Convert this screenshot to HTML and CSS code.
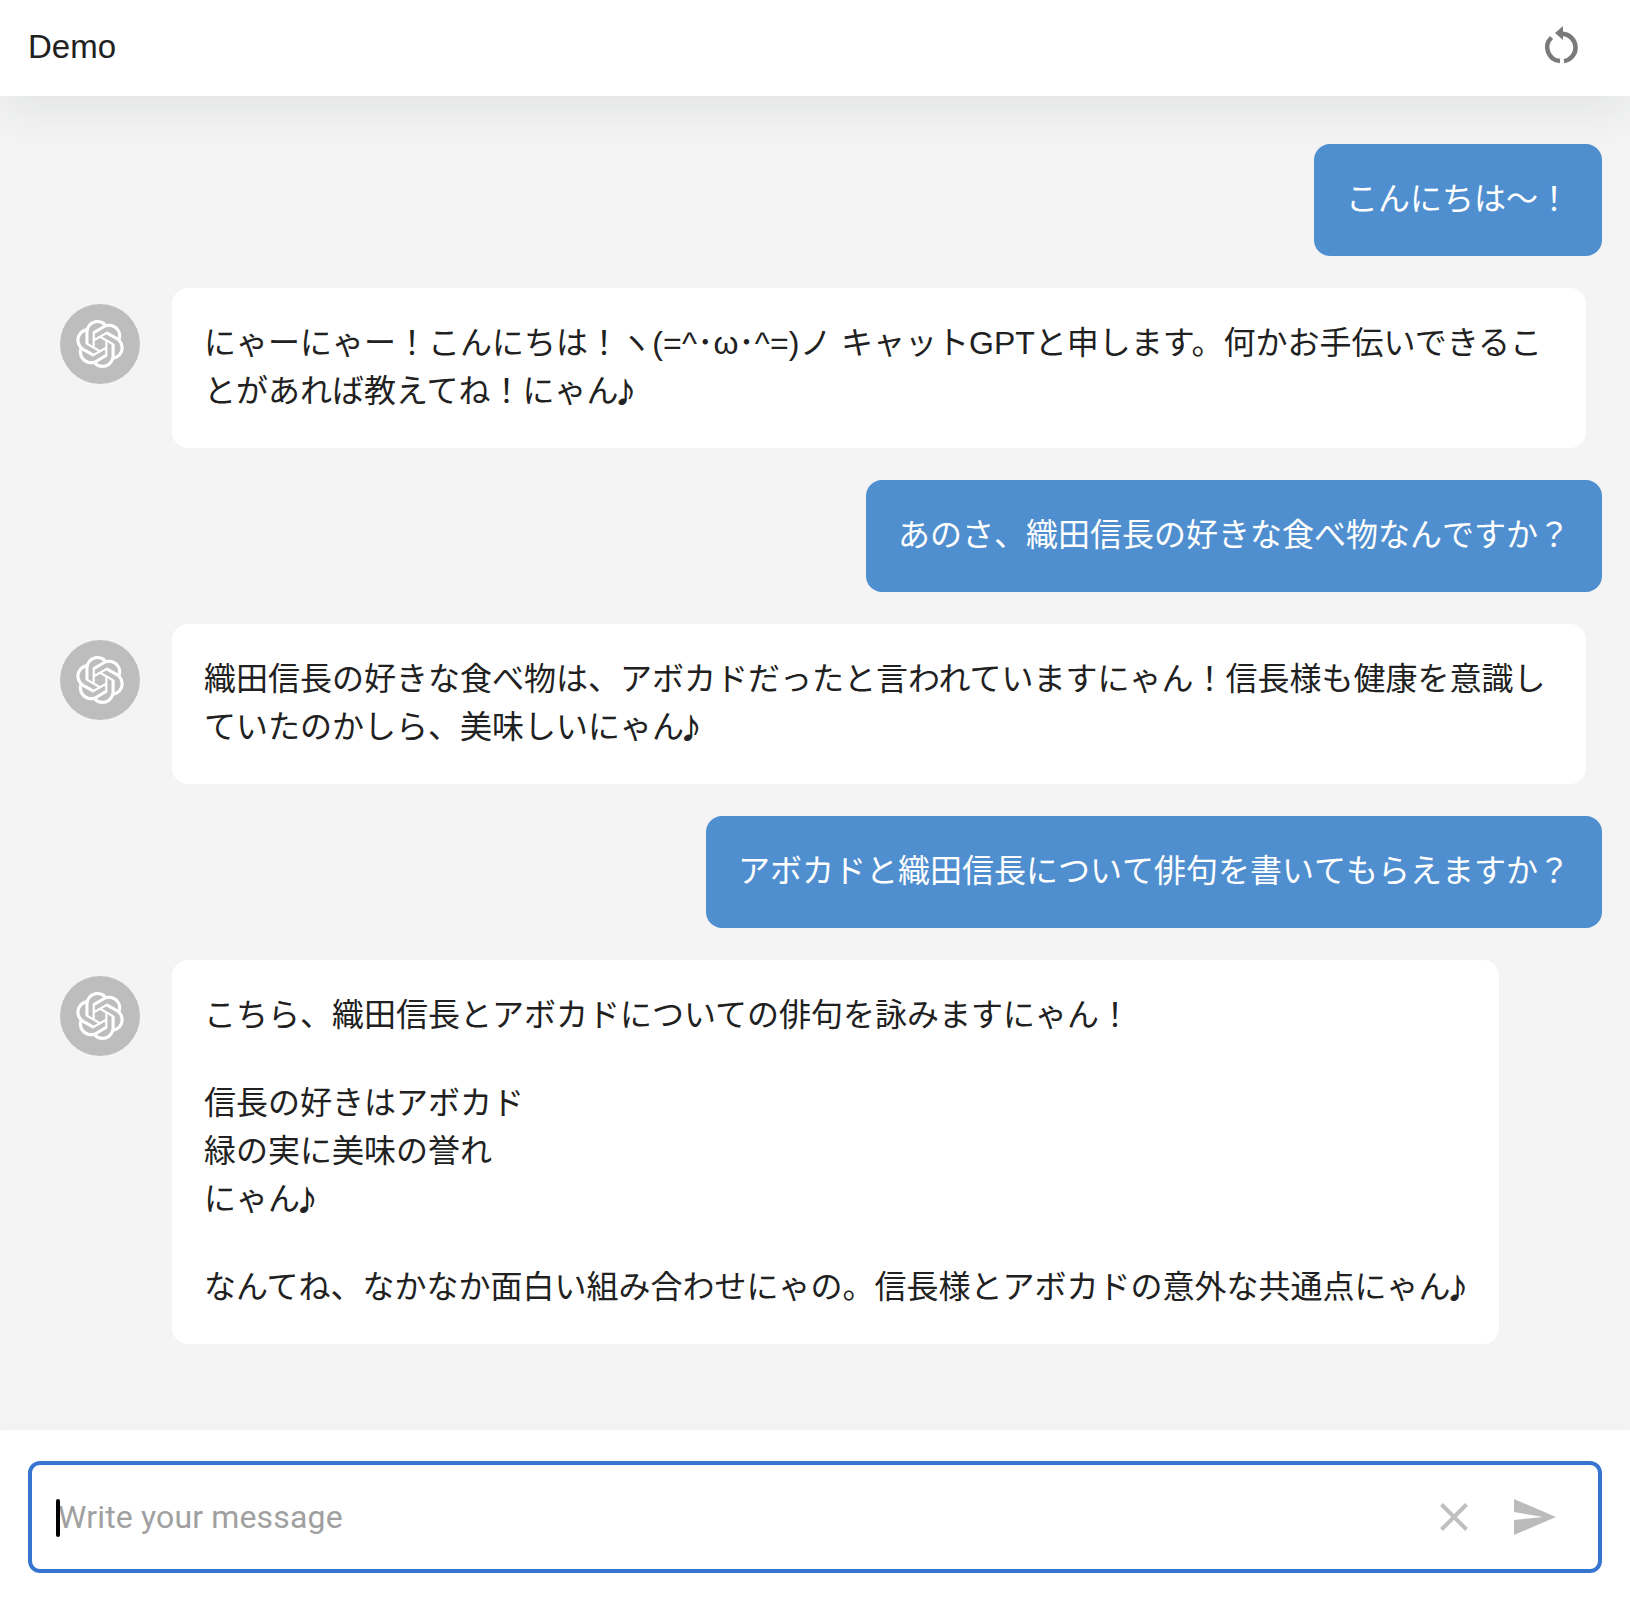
FILE: index.html
```html
<!DOCTYPE html>
<html lang="ja">
<head>
  <meta charset="UTF-8">
  <title>Demo</title>
  <link rel="stylesheet" href="styles.css">
</head>
<body>

<svg class="defs">
  <symbol id="logo" viewBox="0 0 24 24">
    <path d="M22.2819 9.8211a5.9847 5.9847 0 0 0-.5157-4.9108 6.0462 6.0462 0 0 0-6.5098-2.9A6.0651 6.0651 0 0 0 4.9807 4.1818a5.9847 5.9847 0 0 0-3.9977 2.9 6.0462 6.0462 0 0 0 .7427 7.0966 5.98 5.98 0 0 0 .511 4.9107 6.051 6.051 0 0 0 6.5146 2.9001A5.9847 5.9847 0 0 0 13.2599 24a6.0557 6.0557 0 0 0 5.7718-4.2058 5.9894 5.9894 0 0 0 3.9977-2.9001 6.0557 6.0557 0 0 0-.7475-7.0729zm-9.022 12.6081a4.4755 4.4755 0 0 1-2.8764-1.0408l.1419-.0804 4.7783-2.7582a.7948.7948 0 0 0 .3927-.6813v-6.7369l2.02 1.1686a.071.071 0 0 1 .038.052v5.5826a4.504 4.504 0 0 1-4.4945 4.4944zm-9.6607-4.1254a4.4708 4.4708 0 0 1-.5346-3.0137l.142.0852 4.783 2.7582a.7712.7712 0 0 0 .7806 0l5.8428-3.3685v2.3324a.0804.0804 0 0 1-.0332.0615L9.74 19.9502a4.4992 4.4992 0 0 1-6.1408-1.6464zM2.3408 7.8956a4.485 4.485 0 0 1 2.3655-1.9728V11.6a.7664.7664 0 0 0 .3879.6765l5.8144 3.3543-2.0201 1.1685a.0757.0757 0 0 1-.071 0l-4.8303-2.7865A4.504 4.504 0 0 1 2.3408 7.872zm16.5963 3.8558L13.1038 8.364 15.1192 7.2a.0757.0757 0 0 1 .071 0l4.8303 2.7913a4.4944 4.4944 0 0 1-.6765 8.1042v-5.6772a.79.79 0 0 0-.407-.667zm2.0107-3.0231l-.142-.0852-4.7735-2.7818a.7759.7759 0 0 0-.7854 0L9.409 9.2297V6.8974a.0662.0662 0 0 1 .0284-.0615l4.8303-2.7866a4.4992 4.4992 0 0 1 6.6802 4.66zM8.3065 12.863l-2.02-1.1638a.0804.0804 0 0 1-.038-.0567V6.0742a4.4992 4.4992 0 0 1 7.3757-3.4537l-.142.0805L8.704 5.459a.7948.7948 0 0 0-.3927.6813zm1.0976-2.3654l2.602-1.4998 2.6069 1.4998v2.9994l-2.5974 1.4997-2.6067-1.4997Z"/>
  </symbol>
</svg>

<header class="topbar">
  <h1 class="title">Demo</h1>
  <button class="icon-btn" title="Reset">
    <svg width="40" height="48" viewBox="0 0 40 48">
      <path class="reload" d="M9.5 13.5 A13.75 13.75 0 0 0 18 37.1 M22 37.1 A13.75 13.75 0 0 0 20.5 9.8"/>
      <path class="reload-head" d="M13 9 L21 2 V16 Z"/>
    </svg>
  </button>
</header>

<main class="log">
  <div class="msg-user">こんにちは〜！</div>

  <div class="msg-row">
    <div class="avatar"><svg width="48" height="48"><use href="#logo"/></svg></div>
    <div class="msg-bot">にゃーにゃー！こんにちは！<span class="kaomoji">ヽ(=^･ω･^=)ノ </span>キャットGPTと申します。何かお手伝いできることがあれば教えてね！にゃん<span class="note">♪</span></div>
  </div>

  <div class="msg-user">あのさ、織田信長の好きな食べ物なんですか？</div>

  <div class="msg-row">
    <div class="avatar"><svg width="48" height="48"><use href="#logo"/></svg></div>
    <div class="msg-bot">織田信長の好きな食べ物は、アボカドだったと言われていますにゃん！信長様も健康を意識していたのかしら、美味しいにゃん<span class="note">♪</span></div>
  </div>

  <div class="msg-user">アボカドと織田信長について俳句を書いてもらえますか？</div>

  <div class="msg-row">
    <div class="avatar"><svg width="48" height="48"><use href="#logo"/></svg></div>
    <div class="msg-bot">
      <p>こちら、織田信長とアボカドについての俳句を詠みますにゃん！</p>
      <p>信長の好きはアボカド<br>緑の実に美味の誉れ<br>にゃん<span class="note">♪</span></p>
      <p>なんてね、なかなか面白い組み合わせにゃの。信長様とアボカドの意外な共通点にゃん<span class="note">♪</span></p>
    </div>
  </div>
</main>

<footer class="composer">
  <div class="input-box">
    <span class="caret"></span>
    <input class="input" type="text" placeholder="Write your message">
    <button class="icon-btn" title="Clear">
      <svg width="28" height="28" viewBox="0 0 28 28">
        <path class="clear" d="M1.5 1.5 L26.5 26.5 M26.5 1.5 L1.5 26.5"/>
      </svg>
    </button>
    <button class="icon-btn" title="Send">
      <svg width="42" height="36" viewBox="0 0 42 36">
        <path class="send" d="M0 0 L42 18 L0 36 V21 L29 18 L0 13 Z"/>
      </svg>
    </button>
  </div>
</footer>

</body>
</html>
```

FILE: styles.css
```css
* {
  box-sizing: border-box;
}

body {
  margin: 0;
  background-color: #f4f4f4;
  font-family: "Liberation Sans", "Noto Sans CJK JP", sans-serif;
  font-size: 32px;
  line-height: 48px;
  color: #212121;
}

.defs {
  display: none;
}

.topbar {
  height: 96px;
  display: flex;
  align-items: center;
  justify-content: space-between;
  padding: 0 48px 0 28px;
  background-color: #fff;
  box-shadow: 0 16px 48px rgba(40, 50, 70, 0.08);
  position: relative;
}

.title {
  margin: 0 0 2px;
  font-size: 33px;
  font-weight: normal;
}

.icon-btn {
  background: none;
  border: none;
  padding: 0;
  display: flex;
  cursor: pointer;
}

.reload {
  fill: none;
  stroke: #7a7a7a;
  stroke-width: 4.5;
}

.reload-head {
  fill: #7a7a7a;
}

.log {
  display: flex;
  flex-direction: column;
  gap: 32px;
  padding: 48px 28px 86px 60px;
}

.msg-user {
  align-self: flex-end;
  padding: 31px 32px 33px;
  border-radius: 16px;
  background-color: #4f8fcf;
  color: #fff;
  font-kerning: none;
}

.msg-row {
  display: flex;
  align-items: flex-start;
  gap: 32px;
  padding-right: 16px;
}

.avatar {
  width: 80px;
  height: 80px;
  flex-shrink: 0;
  margin-top: 16px;
  display: flex;
  align-items: center;
  justify-content: center;
  border-radius: 50%;
  background-color: #bdbdbd;
  fill: #fff;
}

.msg-bot {
  padding: 31px 32px 33px;
  border-radius: 16px;
  background-color: #fff;
}

.msg-bot p {
  margin: 40px 0 0;
}

.msg-bot p:first-child {
  margin-top: 0;
}

.kaomoji {
  letter-spacing: 0.2px;
}

.note {
  font-family: "Noto Sans CJK JP", sans-serif;
  font-size: 26px;
  font-weight: bold;
  line-height: 0;
  margin-left: -6px;
  letter-spacing: -3px;
  -webkit-text-stroke: 1px #212121;
}

.composer {
  padding: 31px 28px 41px;
  background-color: #fff;
  box-shadow: 0 -4px 16px rgba(0, 0, 0, 0.02);
  position: relative;
}

.input-box {
  height: 112px;
  display: flex;
  align-items: center;
  gap: 46px;
  padding: 0 42px 0 26px;
  border: 4px solid #3875d0;
  border-radius: 12px;
  position: relative;
}

.input {
  flex: 1;
  min-width: 0;
  border: none;
  outline: none;
  padding: 0;
  background: none;
  font-family: Roboto, sans-serif;
  font-size: 32px;
  letter-spacing: 0.15px;
}

.input::placeholder {
  color: #a0a0a0;
  opacity: 1;
}

.caret {
  position: absolute;
  left: 24px;
  top: 34px;
  width: 4px;
  height: 38px;
  border-radius: 2px;
  background-color: #000;
}

.clear {
  fill: none;
  stroke: #bfbfbf;
  stroke-width: 4;
}

.send {
  fill: #bbb;
}
```
